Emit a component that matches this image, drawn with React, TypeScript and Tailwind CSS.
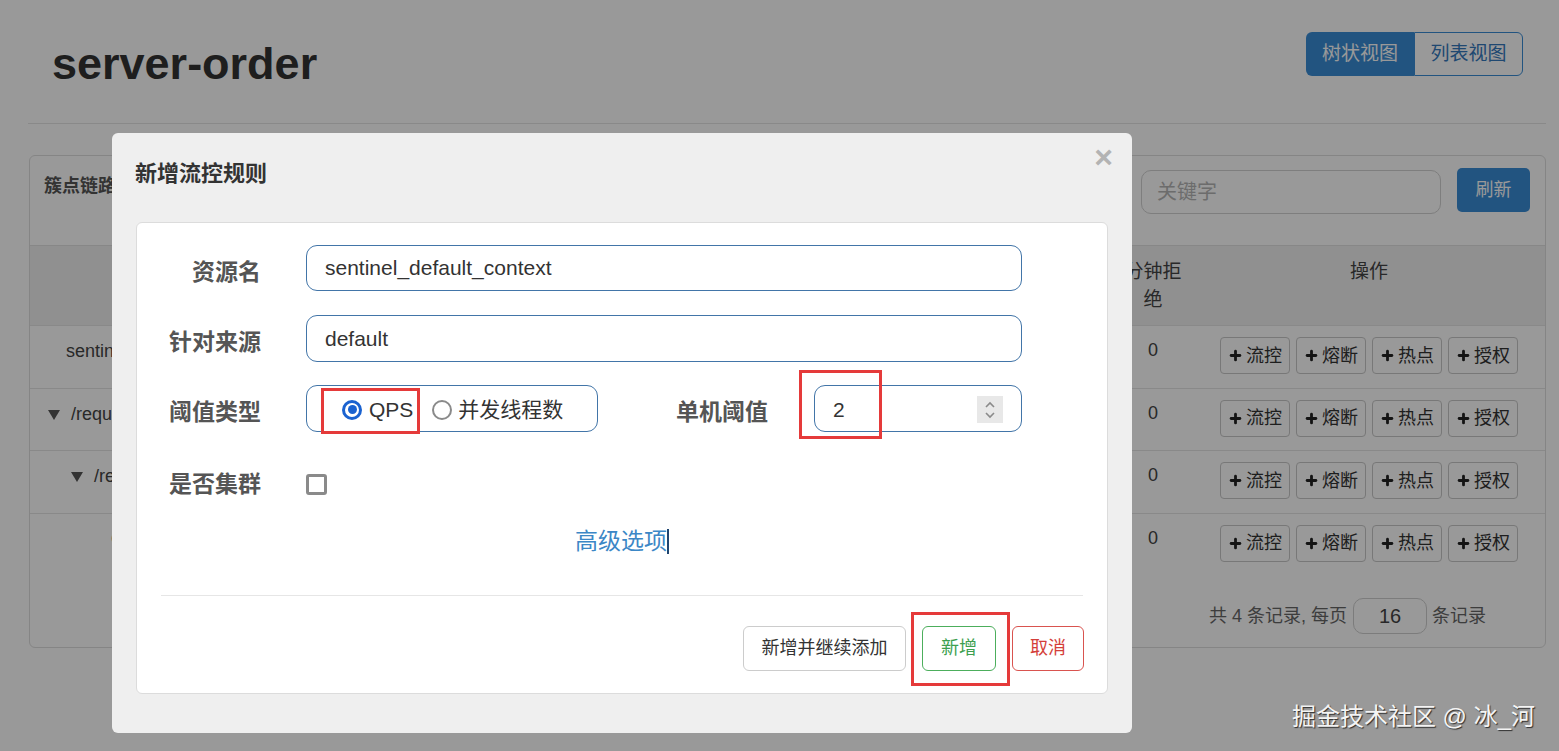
import { Plus } from 'lucide-react';

const treeRows = [
  { name: 'sentinel_default_context', pad: 'pl-[36px]', arrow: false },
  { name: '/request/order', pad: 'pl-[18px]', arrow: true },
  { name: '/request/order', pad: 'pl-[41px]', arrow: true },
  { name: 'GET:/request/order', pad: 'pl-[81px]', arrow: false },
];

const ops = ['流控', '熔断', '热点', '授权'];

function Arrow() {
  return (
    <svg width="12" height="10" viewBox="0 0 12 10" className="mr-[11px] mt-[2px]">
      <path d="M0 0 H12 L6 10 Z" fill="#555" />
    </svg>
  );
}

function Background() {
  return (
    <div className="pl-[28px] pr-[13px]">
      <div className="flex h-[124px] items-start justify-between border-b border-[#e4e4e4]">
        <h1 className="ml-[24px] mt-[39px] text-[45px] font-bold leading-[50px] text-[#333]">server-order</h1>
        <div className="mr-[23px] mt-[32px] flex h-[44px] text-[19px]">
          <div className="flex w-[108px] items-center justify-center rounded-l-[6px] bg-[#3a8dd6] text-white">树状视图</div>
          <div className="flex w-[109px] items-center justify-center rounded-r-[6px] border border-[#3a8dd6] text-[#3478bd]">列表视图</div>
        </div>
      </div>

      <div className="ml-[1px] mt-[31px] h-[493px] rounded-[6px] border border-[#dedede]">
        <div className="flex h-[90px] items-start justify-between border-b border-[#e2e2e2]">
          <div className="ml-[14px] mt-[16px] text-[18px] font-bold leading-[28px] text-[#555]">簇点链路</div>
          <div className="mr-[15px] mt-[12px] flex items-start gap-[16px]">
            <div className="mt-[2px] flex h-[44px] w-[300px] items-center rounded-[10px] border border-[#d2d2d2] pl-[15px] text-[20px] text-[#b5b5b5]">关键字</div>
            <div className="flex h-[44px] w-[73px] items-center justify-center rounded-[5px] bg-[#3a8dd6] text-[18px] text-white">刷新</div>
          </div>
        </div>

        <div className="grid h-[79px] grid-cols-[533px_110px_110px_110px_110px_110px_80px_1fr] bg-[#f0f0f0] text-[19px] leading-[28px] text-[#444]">
          <div className="pt-[12px] text-center">资源名</div>
          <div className="pt-[12px] text-center">通过QPS</div>
          <div className="pt-[12px] text-center">拒绝QPS</div>
          <div className="pt-[12px] text-center">并发数</div>
          <div className="pt-[12px] text-center">平均RT</div>
          <div className="pt-[12px] text-center">分钟通过</div>
          <div className="px-[10px] pt-[12px] text-center">分钟拒绝</div>
          <div className="pt-[12px] text-center">操作</div>
        </div>

        {treeRows.map((r, i) => (
          <div key={i} className="grid h-[62.5px] grid-cols-[533px_110px_110px_110px_110px_110px_80px_1fr] border-t border-[#e4e4e4] text-[18px] leading-[28px] text-[#444]">
            <div className={`flex items-center self-start pt-[11px] ${r.pad}`}>
              {r.arrow && <Arrow />}
              {r.name}
            </div>
            <div className="pt-[10px] text-center">0</div>
            <div className="pt-[10px] text-center">0</div>
            <div className="pt-[10px] text-center">0</div>
            <div className="pt-[10px] text-center">0</div>
            <div className="pt-[10px] text-center">0</div>
            <div className="pt-[10px] text-center">0</div>
            <div className="flex justify-center gap-[6px] pt-[11px]">
              {ops.map((o) => (
                <div key={o} className="flex h-[37px] items-center gap-[3px] rounded-[4px] border border-[#c8c8c8] bg-white px-[7px] text-[18px] text-[#333]">
                  <Plus size={15} strokeWidth={4.5} color="#222" />
                  {o}
                </div>
              ))}
            </div>
          </div>
        ))}

        <div className="mt-[23px] flex items-center justify-end pr-[59px] text-[18px] text-[#666]">
          <span>共 4 条记录, 每页</span>
          <div className="ml-[6px] flex h-[36px] w-[74px] items-center justify-center rounded-[10px] border border-[#cfcfcf] text-[20px] text-[#444]">16</div>
          <span className="ml-[5px]">条记录</span>
        </div>
      </div>
    </div>
  );
}

function Modal() {
  return (
    <div className="absolute left-[112px] top-[133px] h-[600px] w-[1020px] rounded-[6px] bg-[#efefef]">
      <div className="relative h-[89px]">
        <div className="pl-[23px] pt-[27px] text-[22px] font-bold leading-[28px] text-[#333]">新增流控规则</div>
        <div className="absolute right-[19px] top-[4px] text-[32px] font-bold leading-[40px] text-[#b3b3b3]">×</div>
      </div>

      <div className="mx-[24px] h-[472px] rounded-[6px] border border-[#dcdcdc] bg-white">
        <div className="pt-[22px] text-[#555]">
          <div className="flex h-[46px] items-center">
            <div className="w-[124px] pt-[8px] text-right text-[23px] font-bold">资源名</div>
            <div className="ml-[45px] mr-[85px] flex h-full flex-1 items-center rounded-[11px] border border-[#4275a8] pl-[18px] text-[21px] text-[#333]">sentinel_default_context</div>
          </div>

          <div className="mt-[24px] flex h-[47px] items-center">
            <div className="w-[124px] pt-[8px] text-right text-[23px] font-bold">针对来源</div>
            <div className="ml-[45px] mr-[85px] flex h-full flex-1 items-center rounded-[11px] border border-[#4275a8] pl-[18px] text-[21px] text-[#333]">default</div>
          </div>

          <div className="mt-[23px] flex h-[47px] items-center">
            <div className="w-[124px] pt-[8px] text-right text-[23px] font-bold">阈值类型</div>
            <div className="relative ml-[45px] flex h-full w-[292px] items-center rounded-[11px] border border-[#4275a8] pl-[35px] pt-[2px] text-[21px] text-[#333]">
              <span className="flex h-[20px] w-[20px] items-center justify-center rounded-full border-[3px] border-[#1a62d0]">
                <span className="h-[9px] w-[9px] rounded-full bg-[#1a62d0]" />
              </span>
              <span className="ml-[7px]">QPS</span>
              <span className="ml-[19px] h-[20px] w-[20px] rounded-full border-[2px] border-[#8a8a8a]" />
              <span className="ml-[6px]">并发线程数</span>
              <div className="absolute left-[14px] top-[2px] h-[46px] w-[99px] border-[3px] border-[#e53a3a]" />
            </div>
            <div className="w-[170px] pt-[8px] text-right text-[23px] font-bold">单机阈值</div>
            <div className="relative ml-[46px] flex h-full w-[208px] items-center rounded-[11px] border border-[#4275a8] pl-[18px] pt-[2px] text-[21px] text-[#333]">
              <span>2</span>
              <div className="ml-auto mr-[18px] flex h-[27px] w-[26px] items-center justify-center bg-[#e8e8e8]">
                <svg width="12" height="20" viewBox="0 0 12 20" fill="none" stroke="#8a8a8a" strokeWidth="1.6">
                  <path d="M2 7 L6 3 L10 7" />
                  <path d="M2 13 L6 17 L10 13" />
                </svg>
              </div>
              <div className="absolute left-[-16px] top-[-16px] h-[69px] w-[83px] border-[3px] border-[#e53a3a]" />
            </div>
          </div>

          <div className="mt-[37px] flex h-[30px] items-center">
            <div className="w-[124px] text-right text-[23px] font-bold">是否集群</div>
            <div className="ml-[45px] h-[21px] w-[21px] rounded-[3px] border-[3px] border-[#8a8a8a]" />
          </div>

          <div className="mt-[27px] flex h-[30px] items-center justify-center text-[23px] text-[#3c87c6]">
            <span>高级选项</span>
            <span className="h-[25px] w-[2px] bg-[#1f4570]" />
          </div>
        </div>

        <div className="mx-[24px] mt-[39px] border-t border-[#e6e6e6]" />

        <div className="mt-[30px] flex justify-end gap-[16px] pr-[23px] text-[18px]">
          <div className="flex h-[45px] w-[163px] items-center justify-center rounded-[6px] border border-[#cccccc] text-[#333]">新增并继续添加</div>
          <div className="relative flex h-[45px] w-[74px] items-center justify-center rounded-[6px] border border-[#4cae5c] text-[#3d9f4f]">
            新增
            <div className="absolute left-[-12px] top-[-15px] h-[74px] w-[99px] border-[3px] border-[#e53a3a]" />
          </div>
          <div className="flex h-[45px] w-[72px] items-center justify-center rounded-[6px] border border-[#d9534f] text-[#d43f3a]">取消</div>
        </div>
      </div>
    </div>
  );
}

export default function App() {
  return (
    <div className="relative h-[751px] w-[1559px] overflow-hidden bg-white [font-family:'Liberation_Sans','Noto_Sans_CJK_SC',sans-serif]">
      <Background />
      <div className="absolute inset-0 bg-black/40" />
      <Modal />
      <div className="absolute bottom-[19px] right-[24px] text-[24px] leading-[30px] text-[#f4f4f4] [text-shadow:1px_1px_1px_rgba(0,0,0,0.7)]">
        掘金技术社区 @ 冰_河
      </div>
    </div>
  );
}
